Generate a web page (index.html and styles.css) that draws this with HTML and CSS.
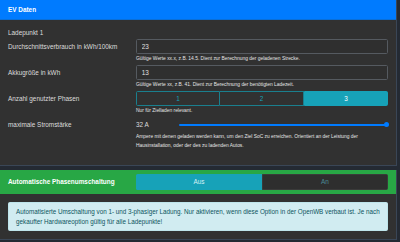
FILE: index.html
```html
<!DOCTYPE html>
<html lang="de">
<head>
<meta charset="utf-8">
<title>EV Daten</title>
<link rel="stylesheet" href="styles.css">
</head>
<body>
<div class="page">
  <section class="card">
    <div class="card-header blue">EV Daten</div>
    <div class="card-body first">
      <div class="title">Ladepunkt 1</div>
      <div class="field">
        <div class="label">Durchschnittsverbrauch in kWh/100km</div>
        <div class="control">
          <input class="input" type="text" value="23">
          <div class="help">Gültige Werte xx.x, z.B. 14.5. Dient zur Berechnung der geladenen Strecke.</div>
        </div>
      </div>
      <div class="field">
        <div class="label">Akkugröße in kWh</div>
        <div class="control">
          <input class="input" type="text" value="13">
          <div class="help">Gültige Werte xx, z.B. 41. Dient zur Berechnung der benötigten Ladezeit.</div>
        </div>
      </div>
      <div class="field">
        <div class="label">Anzahl genutzter Phasen</div>
        <div class="control">
          <div class="btn-group three">
            <div class="btn outline">1</div>
            <div class="btn outline">2</div>
            <div class="btn active">3</div>
          </div>
          <div class="help">Nur für Zielladen relevant.</div>
        </div>
      </div>
      <div class="field">
        <div class="label">maximale Stromstärke</div>
        <div class="control">
          <div class="slider-row">
            <div class="value">32 A</div>
            <div class="track"><span class="thumb"></span></div>
          </div>
          <div class="help">Ampere mit denen geladen werden kann, um den Ziel SoC zu erreichen. Orientiert an der Leistung der Hausinstallation, oder der des zu ladenden Autos.</div>
        </div>
      </div>
    </div>
  </section>

  <section class="card second">
    <div class="card-header green">
      <div class="field head">
        <div class="label bold">Automatische Phasenumschaltung</div>
        <div class="btn-group two">
          <div class="btn on">Aus</div>
          <div class="btn off">An</div>
        </div>
      </div>
    </div>
    <div class="card-body">
      <div class="alert">Automatisierte Umschaltung von 1- und 3-phasiger Ladung. Nur aktivieren, wenn diese Option in der OpenWB verbaut ist. Je nach gekaufter Hardwareoption gültig für alle Ladepunkte!</div>
    </div>
  </section>
</div>
</body>
</html>
```

FILE: styles.css
```css
html, body {
  margin: 0;
  padding: 0;
}
body {
  background: #242a33;
  font-family: "Liberation Sans", Arial, sans-serif;
  font-size: 6.4px;
  line-height: 9.6px;
  color: #dcdcdc;
  width: 400px;
  height: 242px;
  overflow: hidden;
}
.page {
  width: 397px;
}
.card {
  background: #313131;
  border-right: 1px solid #3a4656;
  border-bottom: 1px solid #3a4656;
}
.card.second {
  margin-top: 3.7px;
}
.card-header {
  padding: 4.8px 8px;
  color: #fff;
}
.card-header.blue {
  background: #007bff;
  font-weight: bold;
  border-bottom: 1px solid #0a6fd8;
}
.card-header.green {
  background: #28a745;
}
.card-body {
  padding: 8px;
}
.card-body.first {
  padding-bottom: 13.5px;
}
.title {
  height: 9.6px;
  margin-bottom: 1.4px;
}
.field {
  display: grid;
  grid-template-columns: 128px 1fr;
  margin-bottom: 1.5px;
}
.field.head {
  margin-bottom: 0;
}
.label {
  height: 15.2px;
  display: flex;
  align-items: center;
}
.label.bold {
  font-weight: bold;
  color: #fff;
}
.control {
  min-width: 0;
}
.input {
  display: block;
  box-sizing: border-box;
  width: 100%;
  height: 15.2px;
  margin: 0;
  padding: 0 4.8px;
  border: 1px solid #555a60;
  border-radius: 1.6px;
  background: #2f2f2f;
  color: #e0e0e0;
  font-family: inherit;
  font-size: 6.4px;
  outline: none;
}
.help {
  margin-top: 1px;
  font-size: 4.9px;
  line-height: 8.3px;
  color: #e6e6e6;
}
.btn-group {
  display: grid;
  height: 15.2px;
}
.btn-group.three {
  grid-template-columns: 1fr 1fr 1fr;
}
.btn-group.two {
  grid-template-columns: 1fr 1fr;
}
.btn {
  display: flex;
  align-items: center;
  justify-content: center;
  box-sizing: border-box;
  font-size: 6.4px;
}
.btn.outline {
  border: 1px solid #1a7f8e;
  color: #17a2b8;
}
.btn.outline + .btn.outline {
  border-left: 0;
}
.btn.active {
  background: #17a2b8;
  border: 1px solid #17a2b8;
  color: #fff;
  border-radius: 0 1.6px 1.6px 0;
}
.btn.outline:first-child {
  border-radius: 1.6px 0 0 1.6px;
}
.btn.on {
  background: #17a2b8;
  color: #d8f1f5;
  border-radius: 1.6px 0 0 1.6px;
}
.btn.off {
  background: #2e2e2e;
  color: #4c8b95;
  border: 1px solid #3a3a3a;
  border-radius: 0 1.6px 1.6px 0;
}
.slider-row {
  display: flex;
  align-items: center;
  height: 15.2px;
}
.value {
  width: 43px;
  flex: none;
}
.track {
  position: relative;
  flex: 1;
  height: 2px;
  margin-right: 2px;
  background: #007bff;
  border-radius: 1px;
}
.thumb {
  position: absolute;
  right: -2.5px;
  top: -1.5px;
  width: 5px;
  height: 5px;
  border-radius: 50%;
  background: #007bff;
}
.alert {
  background: #d1ecf1;
  color: #0c5460;
  border: 1px solid #bee5eb;
  border-radius: 1.6px;
  padding: 3.8px 6px 3.8px 7px;
  font-size: 6.3px;
}
```
